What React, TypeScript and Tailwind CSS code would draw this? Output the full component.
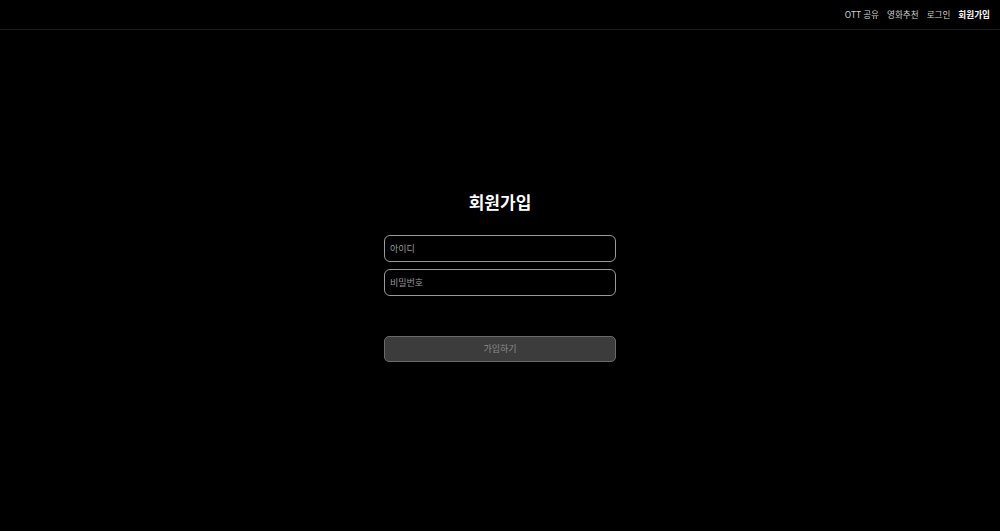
export default function App() {
  return (
    <div
      className="flex min-h-[531px] flex-col bg-black text-white"
      style={{ fontFamily: '"Noto Sans CJK KR", "Noto Sans", sans-serif' }}
    >
      {/* 상단 네비게이션 */}
      <header className="flex h-[30px] items-center justify-end gap-[8px] border-b border-[#1c1c1c] pr-[10px] text-[8.6px] text-[#d0d0d0]">
        <a>OTT 공유</a>
        <a>영화추천</a>
        <a>로그인</a>
        <a className="font-bold text-white">회원가입</a>
      </header>

      <main className="flex flex-1 flex-col items-center pt-[160px]">
        <h1 className="text-[17px] font-bold leading-[24px]">회원가입</h1>
        <form className="mt-[21px] flex w-[232px] flex-col">
          <input
            placeholder="아이디"
            className="h-[27px] rounded-[6px] border border-[#9a9a9a] bg-black px-[5px] text-[9px] text-white outline-none placeholder:text-[#9a9a9a]"
          />
          <input
            type="password"
            placeholder="비밀번호"
            className="mt-[7px] h-[27px] rounded-[6px] border border-[#9a9a9a] bg-black px-[5px] text-[9px] text-white outline-none placeholder:text-[#9a9a9a]"
          />
          <button
            type="button"
            className="mt-[40px] h-[26px] rounded-[5px] border border-[#6a6a6a] bg-[#3c3c3c] text-[9px] text-[#8a8a8a]"
          >
            가입하기
          </button>
        </form>
      </main>
    </div>
  )
}
